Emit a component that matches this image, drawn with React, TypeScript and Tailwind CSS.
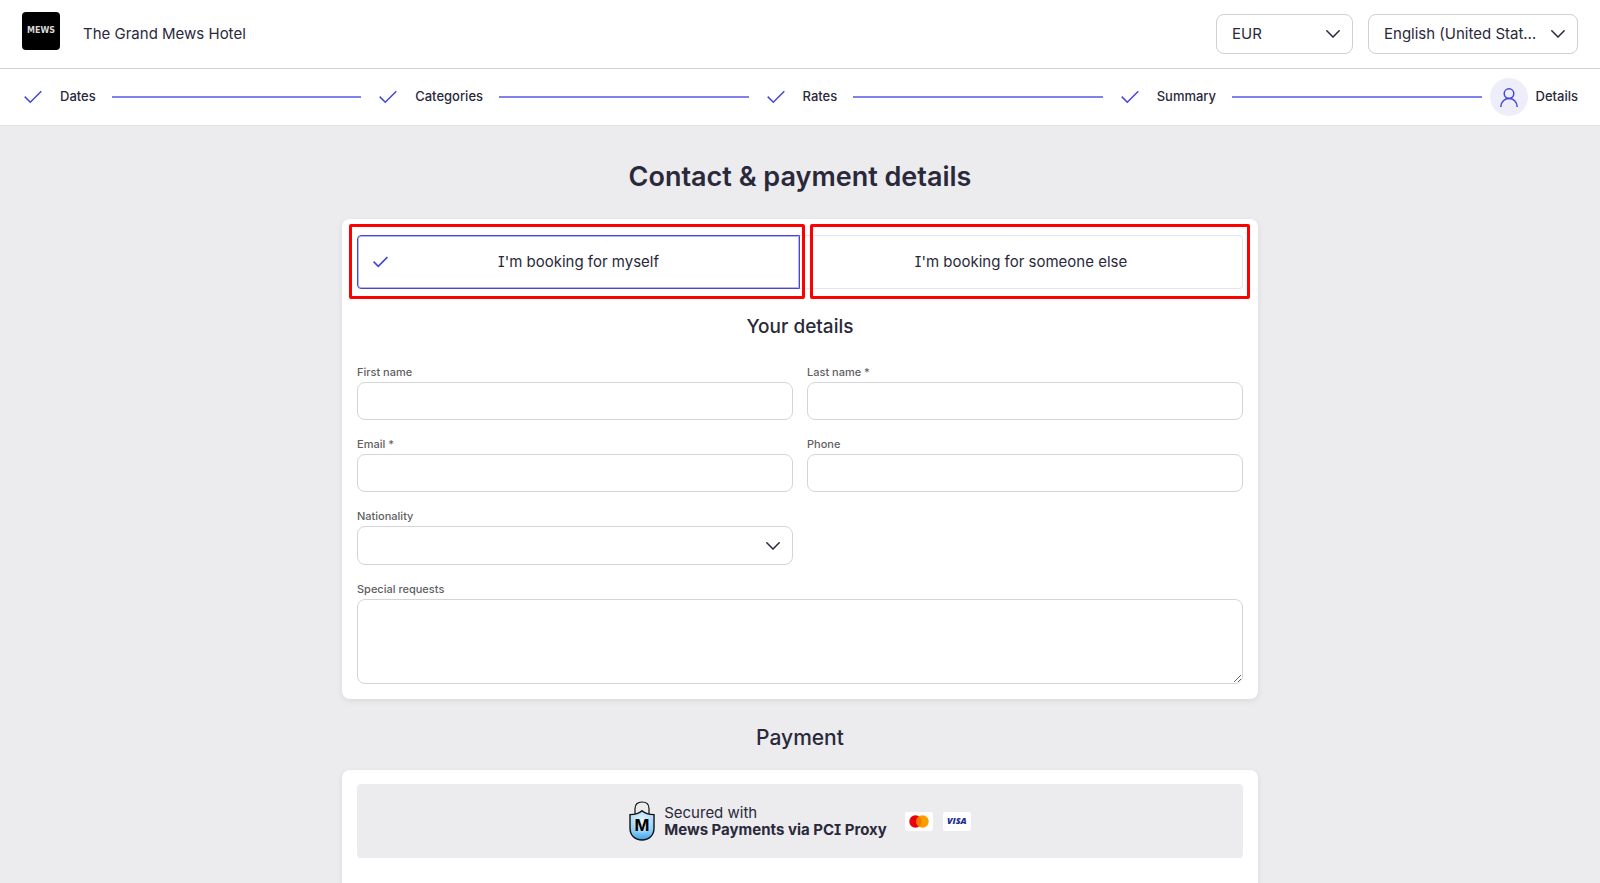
import { Fragment, useState, type ReactNode } from "react";

const STEPS = ["Dates", "Categories", "Rates", "Summary"];

const inputClass = "block w-full rounded-lg border border-[#d5d5d8] bg-white px-4 text-[15px] outline-none focus:border-[#4646dc]";

function CheckIcon({ className }: { className: string }) {
  return (
    <svg viewBox="0 0 18 14" className={className} fill="none" stroke="currentColor" aria-hidden="true">
      <path d="M0.7 6.6 L6.3 12.2 L17.3 1.2" />
    </svg>
  );
}

function ChevronIcon() {
  return (
    <svg viewBox="0 0 14 8" className="pointer-events-none absolute top-1/2 right-[13px] h-2 w-[14px] -translate-y-1/2" fill="none" stroke="#2a293b" strokeWidth="1.5" strokeLinecap="round" aria-hidden="true">
      <path d="M0.8 0.8 L7 7 L13.2 0.8" />
    </svg>
  );
}

function LockIcon() {
  return (
    <svg viewBox="0 0 26 40" className="h-10 w-[26px]" aria-hidden="true">
      <defs>
        <linearGradient id="shield" x1="0" y1="0" x2="0" y2="1">
          <stop offset="0.2" stopColor="#b9e0fb" />
          <stop offset="0.7" stopColor="#8accf8" />
          <stop offset="1" stopColor="#3da2ee" />
        </linearGradient>
        <radialGradient id="glow">
          <stop offset="0" stopColor="#fff" stopOpacity="0.9" />
          <stop offset="1" stopColor="#fff" stopOpacity="0" />
        </radialGradient>
      </defs>
      <path d="M6 14 V7.5 C6 3.5 8.5 1 13 1 C17.5 1 20 3.5 20 7.5 V14" fill="none" stroke="#111" strokeWidth="1.2" />
      <path d="M13 9.8 Q17 13.6 25 13.6 V27 C25 34.5 20 39 13 39 C6 39 1 34.5 1 27 V13.6 Q9 13.6 13 9.8 Z" fill="url(#shield)" stroke="#111" strokeWidth="1.4" />
      <ellipse cx="13" cy="22" rx="10" ry="11" fill="url(#glow)" />
      <text x="13" y="30" textAnchor="middle" fontSize="16" fontWeight="700" fill="#000">M</text>
    </svg>
  );
}

function Field({ id, label, className, children }: { id: string; label: string; className?: string; children: ReactNode }) {
  return (
    <div className={className}>
      <label htmlFor={id} className="block h-4 text-[11px] leading-3 font-medium text-[#5f5f64]">{label}</label>
      {children}
    </div>
  );
}

export default function App() {
  const [forMyself, setForMyself] = useState(true);

  return (
    <div className="min-h-screen bg-[#ececee] font-[Inter,sans-serif] text-[15px] text-[#2a293b] [font-feature-settings:'cv08']">
      {/* Header */}
      <header className="flex h-[69px] items-center justify-between border-b border-[#cfcfd6] bg-white px-[22px]">
        <div className="flex items-center gap-[23px]">
          <div className="mb-[6px] flex size-[38px] items-center justify-center rounded bg-black font-['DejaVu_Sans',sans-serif] text-[8px] font-bold text-[#d8d8d8]">
            MEWS
          </div>
          <span>The Grand Mews Hotel</span>
        </div>
        <div className="flex gap-[15px]">
          <div className="relative">
            <select aria-label="Currency" className="h-10 w-[137px] appearance-none rounded-lg border border-[#d0d0d4] bg-white pl-[15px]">
              <option>EUR</option>
            </select>
            <ChevronIcon />
          </div>
          <div className="relative">
            <select aria-label="Language" className="h-10 w-[210px] appearance-none overflow-hidden rounded-lg border border-[#d0d0d4] bg-white pr-9 pl-[15px] text-ellipsis">
              <option>English (United States)</option>
            </select>
            <ChevronIcon />
          </div>
        </div>
      </header>

      {/* Booking steps */}
      <nav className="flex h-[57px] items-center border-b border-[#e2e2e4] bg-white pr-[22px] pl-[14px] text-[13px] font-medium">
        {STEPS.map((step) => (
          <Fragment key={step}>
            <a href="#" className="flex items-center gap-2">
              <span className="flex size-[38px] items-center justify-center text-[#4646dc]">
                <CheckIcon className="h-[14px] w-[18px] stroke-[1.5]" />
              </span>
              {step}
            </a>
            <div className="mr-2 ml-4 h-[2px] flex-1 bg-[#8181ed]" />
          </Fragment>
        ))}
        <a href="#" aria-current="step" className="flex items-center gap-2">
          <span className="flex size-[38px] items-center justify-center rounded-full bg-[#eeeefb]">
            <svg viewBox="0 0 18 19" className="h-[19px] w-[18px]" fill="none" stroke="#4646dc" strokeWidth="1.5" aria-hidden="true">
              <circle cx="9" cy="5.6" r="4.8" />
              <path d="M0.8 19 C0.8 7.8 17.2 7.8 17.2 19" />
            </svg>
          </span>
          Details
        </a>
      </nav>

      <main className="mx-auto max-w-[916px]">
        <h1 className="pt-[33px] pb-6 text-center text-[27px] leading-9 font-semibold">Contact &amp; payment details</h1>

        {/* Guest details */}
        <form className="rounded-lg bg-white px-[15px] pt-4 pb-[15px] shadow-[0_2px_6px_rgba(0,0,0,0.08)]">
          <div className="grid h-[54px] grid-cols-2">
            <div className="relative z-10">
              <button type="button" aria-pressed={forMyself} onClick={() => setForMyself(true)} className="h-full w-full rounded-l border border-[#e6e6ea] aria-pressed:border-[#4646dc] aria-pressed:outline aria-pressed:-outline-offset-2 aria-pressed:outline-[#4646dc]/40">
                {forMyself && <CheckIcon className="absolute top-1/2 left-4 h-3 w-[15px] -translate-y-1/2 stroke-2 text-[#4646dc]" />}
                I'm booking for myself
              </button>
              <span className="pointer-events-none absolute -top-[11px] -right-[5px] -bottom-[10px] -left-2 rounded-xs border-3 border-[#ff0000]" />
            </div>
            <div className="relative">
              <button type="button" aria-pressed={!forMyself} onClick={() => setForMyself(false)} className="h-full w-full rounded-r border border-l-0 border-[#e6e6ea] aria-pressed:border-[#4646dc]">
                I'm booking for someone else
              </button>
              <span className="pointer-events-none absolute -top-[11px] -right-[7px] -bottom-[10px] left-[10px] rounded-xs border-3 border-[#ff0000]" />
            </div>
          </div>

          <h2 className="pt-6 pb-[25px] text-center text-[19px] leading-7 font-medium">Your details</h2>

          <div className="grid grid-cols-2 gap-x-[14px] gap-y-[18px]">
            <Field id="first-name" label="First name">
              <input id="first-name" type="text" className={`${inputClass} h-[38px]`} />
            </Field>
            <Field id="last-name" label="Last name *">
              <input id="last-name" type="text" required className={`${inputClass} h-[38px]`} />
            </Field>
            <Field id="email" label="Email *">
              <input id="email" type="email" required className={`${inputClass} h-[38px]`} />
            </Field>
            <Field id="phone" label="Phone">
              <input id="phone" type="tel" className={`${inputClass} h-[38px]`} />
            </Field>
            <Field id="nationality" label="Nationality">
              <div className="relative">
                <select id="nationality" className={`${inputClass} h-[39px] appearance-none`} />
                <ChevronIcon />
              </div>
            </Field>
            <Field id="requests" label="Special requests" className="col-span-2">
              <textarea id="requests" className={`${inputClass} h-[85px] resize-y`} />
            </Field>
          </div>
        </form>

        {/* Payment */}
        <h2 className="pt-[23px] pb-4 text-center text-[21px] leading-8 font-medium">Payment</h2>
        <section className="rounded-t-lg bg-white px-[15px] pt-[14px] pb-[26px] shadow-[0_2px_6px_rgba(0,0,0,0.08)]">
          <div className="flex h-[74px] items-center justify-center rounded bg-[#ececee]">
            <LockIcon />
            <p className="ml-[9px] leading-[17px]">
              Secured with
              <br />
              <strong className="font-bold">Mews Payments via PCI Proxy</strong>
            </p>
            <svg viewBox="0 0 28 19" className="ml-[18px] h-[19px] w-7 rounded-xs bg-white" role="img" aria-label="Mastercard">
              <circle cx="10.5" cy="9.5" r="6.2" fill="#eb0010" />
              <circle cx="17.5" cy="9.5" r="6.2" fill="#f9a000" />
              <path d="M14 4.4 A6.2 6.2 0 0 1 14 14.6 A6.2 6.2 0 0 1 14 4.4" fill="#f47b00" />
            </svg>
            <span className="ml-[10px] flex h-[19px] w-7 items-center justify-center rounded-xs bg-white font-['Open_Sans',sans-serif] text-[9px] font-extrabold text-[#1f2f8f] italic">
              VISA
            </span>
          </div>
        </section>
      </main>
    </div>
  );
}
